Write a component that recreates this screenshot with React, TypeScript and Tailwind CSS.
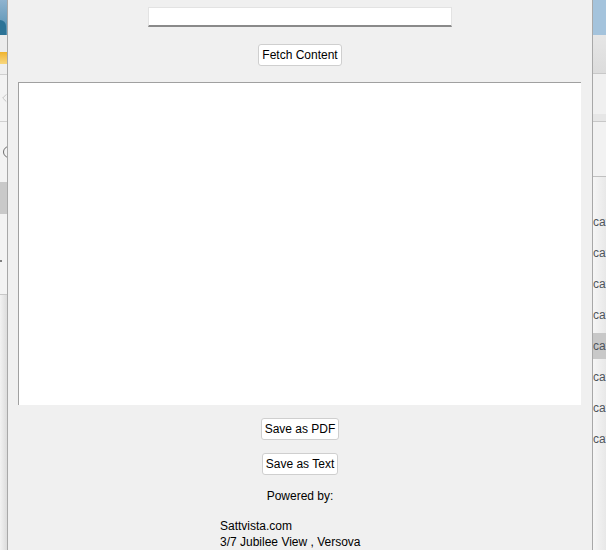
import React from "react";

const rows = [223, 254, 285, 316, 347, 378, 409, 440];

const LeftStrip = () => (
  <div className="w-[7px] shrink-0 flex flex-col bg-[#e9e9e9] overflow-hidden">
    <div className="h-[35px] bg-gradient-to-b from-[#8fb3cf] to-[#4f8fb0] relative">
      <div className="absolute left-0 top-[20px] w-[6px] h-[15px] rounded-tr-full bg-[#2c7396]" />
    </div>
    <div className="h-[17px] bg-[#ececec]" />
    <div className="h-[12px] bg-gradient-to-b from-[#f0b429] to-[#f8d77c]" />
    <div className="h-[11px] bg-[#efefef] border-b border-[#d0d0d0]" />
    <div className="h-[47px] bg-[#f3f3f3] border-b border-[#d0d0d0] flex items-center">
      <svg width="7" height="12" viewBox="0 0 7 12" className="ml-[2px]">
        <path d="M6 1 L1 6 L6 11" fill="none" stroke="#b0b0b0" strokeWidth="1" />
      </svg>
    </div>
    <div className="h-[60px] bg-[#f3f3f3] flex items-center">
      <div className="w-[12px] h-[12px] ml-[3px] shrink-0 rounded-full border border-[#707070]" />
    </div>
    <div className="h-[32px] bg-[#c9c9c9]" />
    <div className="h-[81px] bg-[#f3f3f3] border-b border-[#c8c8c8] relative">
      <div className="absolute left-0 top-[46px] w-[2px] h-[2px] bg-[#808080]" />
    </div>
    <div className="flex-1 bg-gradient-to-r from-[#f2f2f2] to-[#dcdcdc]" />
  </div>
);

const RightStrip = () => (
  <div className="w-[13px] shrink-0 flex flex-col bg-[#f4f4f4] overflow-hidden font-['Liberation_Sans',sans-serif] text-[12px] text-[#50555c]">
    <div className="h-[35px] bg-[#a4c3dc]" />
    <div className="h-[39px] bg-gradient-to-b from-[#e6e6e6] to-[#dcdcdc] border-b border-[#c8c8c8]" />
    <div className="h-[40px] bg-[#f0f0f0]" />
    <div className="h-[8px] bg-[#e6e6e6] border-b border-[#c8c8c8]" />
    <div className="h-[55px] bg-[#f2f2f2] border-b border-[#c0c0c0]" />
    <div className="flex-1 relative bg-gradient-to-r from-[#f6f6f6] to-[#e8e8e8]">
      {rows.map((y) => (
        <div
          key={y}
          className={
            y === 347
              ? "absolute left-0 w-full h-[26px] bg-[#c8c8c8] flex items-center whitespace-nowrap"
              : "absolute left-0 w-full h-[26px] flex items-center whitespace-nowrap"
          }
          style={{ top: y - 178 - 13 }}
        >
          cat
        </div>
      ))}
    </div>
  </div>
);

const Btn = ({ label }: { label: string }) => (
  <button className="block h-[22px] px-[3px] bg-white border border-[#cfcfcf] rounded-[3px] text-[12px] leading-none text-black">
    {label}
  </button>
);

const App = () => {
  return (
    <main className="w-[606px] h-[550px] flex overflow-hidden font-['Liberation_Sans',sans-serif]">
      <LeftStrip />
      <div className="w-px bg-[#a8a8a8] shrink-0" />
      <div className="w-[584px] shrink-0 bg-[#f0f0f0] flex flex-col items-center pt-[7px]">
        <div className="w-[304px] h-[20px] bg-white border border-[#e3e3e3] border-b-2 border-b-[#8a8a8a]" />
        <div className="mt-[17px] flex">
          <Btn label="Fetch Content" />
        </div>
        <div className="self-start ml-[10px] mt-[16px] w-[563px] h-[323px] bg-white border-t border-l border-[#a0a0a0]" />
        <div className="mt-[13px] flex">
          <Btn label="Save as PDF" />
        </div>
        <div className="mt-[13px] flex">
          <Btn label="Save as Text" />
        </div>
        <p className="mt-[14px] text-[12px] leading-[15px] text-black">Powered by:</p>
        <div className="self-start ml-[212px] mt-[14px] text-[12px] leading-[16px] text-black">
          <p>Sattvista.com</p>
          <p>3/7 Jubilee View , Versova</p>
        </div>
      </div>
      <div className="w-px bg-[#a8a8a8] shrink-0" />
      <RightStrip />
    </main>
  );
};

export default App;
